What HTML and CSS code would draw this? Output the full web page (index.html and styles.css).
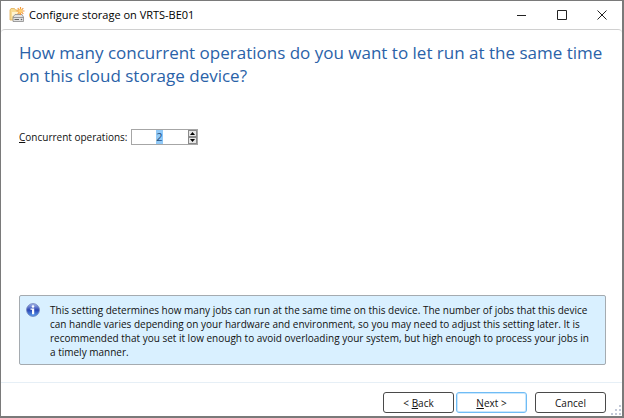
FILE: index.html
```
<!DOCTYPE html>
<html lang="en">
<head>
    <meta charset="UTF-8">
    <meta name="viewport" content="width=device-width, initial-scale=1.0">
    <title>Configure storage on VRTS-BE01</title>
    <link rel="stylesheet" href="styles.css">
</head>
<body>
    <div class="window">
        <header class="titlebar">
            <svg class="app-icon" width="16" height="16" viewBox="0 0 16 16" aria-hidden="true">
                <path d="M1 13 V3 L2 1.500 H5.500 L6.500 3 H11 V13 Z" fill="#f8dc94" stroke="#e0ae58" stroke-width=".8"/>
                <path d="M3 5 H10 V9 H3 Z" fill="#fff3cf"/>
                <path d="M4 10 L6 7.500 H13 L14.500 10 V14.500 H4 Z" fill="#e2e2e2" stroke="#8a8a8a" stroke-width=".8"/>
                <path d="M4 10.500 H14.500" stroke="#8a8a8a" stroke-width=".8"/>
                <path d="M5.500 12.500 H10" stroke="#666"/>
                <circle cx="12.500" cy="12.500" r=".8" fill="#666"/>
                <path d="M11.500 0 V8 M7.500 4 H15.500 M8.700 1.200 L14.300 6.800 M14.300 1.200 L8.700 6.800" stroke="#f29a3e" stroke-width="1.200"/>
                <circle cx="11.500" cy="4" r="1.900" fill="#ffcf70"/>
            </svg>
            <h1 class="window-title">Configure storage on VRTS-BE01</h1>
            <div class="window-controls">
                <button type="button" class="window-button" aria-label="Minimize">
                    <svg width="10" height="10" viewBox="0 0 10 10"><path d="M0 5.500 H9"/></svg>
                </button>
                <button type="button" class="window-button" aria-label="Maximize">
                    <svg width="10" height="10" viewBox="0 0 10 10"><path d="M.5 .5 H9.500 V9.500 H.5 Z"/></svg>
                </button>
                <button type="button" class="window-button" aria-label="Close">
                    <svg width="10" height="10" viewBox="0 0 10 10"><path d="M.5 .5 L9.500 9.500 M9.500 .5 L.5 9.500"/></svg>
                </button>
            </div>
        </header>

        <form class="wizard">
            <main class="content">
                <h2 class="question">How many concurrent operations do you want to let run at the same time on this cloud storage device?</h2>

                <div class="field">
                    <label for="operations"><u>C</u>oncurrent operations:</label>
                    <div class="spinner">
                        <input type="text" id="operations" class="spinner-value" name="operations" value="2" inputmode="numeric" autocomplete="off">
                        <div class="spinner-buttons">
                            <button type="button" class="spin" data-step="1" aria-label="Increase">
                                <svg width="5" height="3" viewBox="0 0 5 3"><path d="M0 3 L2.500 0 L5 3 Z"/></svg>
                            </button>
                            <button type="button" class="spin" data-step="-1" aria-label="Decrease">
                                <svg width="5" height="3" viewBox="0 0 5 3"><path d="M0 0 H5 L2.500 3 Z"/></svg>
                            </button>
                        </div>
                    </div>
                </div>

                <div class="info">
                    <svg class="info-icon" width="14" height="14" viewBox="0 0 14 14" aria-hidden="true">
                        <defs>
                            <linearGradient id="ball" x1="0" y1="0" x2="0" y2="1">
                                <stop offset="0" stop-color="#a9bcee"/>
                                <stop offset=".5" stop-color="#2a45b4"/>
                                <stop offset="1" stop-color="#5aa0f0"/>
                            </linearGradient>
                        </defs>
                        <circle cx="7" cy="7" r="6.400" fill="url(#ball)" stroke="#6b7cb8" stroke-width=".8"/>
                        <circle cx="7" cy="3.500" r="1.300" fill="#fff"/>
                        <path d="M4.500 5.500 H8.200 V11.200 H6 V6.800 H4.500 Z" fill="#fff"/>
                    </svg>
                    <p class="info-text">This setting determines how many jobs can run at the same time on this device. The number of jobs that this device can handle varies depending on your hardware and environment, so you may need to adjust this setting later. It is recommended that you set it low enough to avoid overloading your system, but high enough to process your jobs in a timely manner.</p>
                </div>
            </main>

            <footer class="footer">
                <button type="button" class="button">&lt; <u>B</u>ack</button>
                <button type="submit" class="button button-default"><u>N</u>ext &gt;</button>
                <button type="button" class="button button-cancel">Cancel</button>
            </footer>
        </form>

        <svg class="grip" width="11" height="11" viewBox="0 0 11 11" aria-hidden="true">
            <path d="M8 0h2v2h-2z M8 4h2v2h-2z M4 4h2v2h-2z M8 8h2v2h-2z M4 8h2v2h-2z M0 8h2v2h-2z"/>
        </svg>
    </div>

    <script>
        const operations = document.getElementById("operations");

        document.querySelectorAll(".spin").forEach(function (button) {
            button.addEventListener("click", function () {
                const value = Number(operations.value) + Number(button.dataset.step);
                operations.value = Math.max(1, value);
                operations.select();
            });
        });

        operations.focus();
        operations.select();
    </script>
</body>
</html>
```

FILE: styles.css
```
* {
    box-sizing: border-box;
    margin: 0;
    padding: 0;
}

body {
    font-family: "Open Sans", "Segoe UI", sans-serif;
    font-size: 10px;
    line-height: 14px;
    color: #111;
    background: #fff;
}

button,
input {
    font: inherit;
    color: inherit;
}

.window {
    position: relative;
    display: flex;
    flex-direction: column;
    min-height: 100vh;
    border: 1px solid #7a7a7a;
    border-width: 1px 2px 2px 1px;
    background: #fff;
}

.titlebar {
    display: flex;
    align-items: center;
    height: 28px;
    padding-left: 8px;
}

.window-title {
    flex: 1;
    margin-left: 4px;
    font-size: 11px;
    font-weight: 400;
    color: #000;
}

.window-controls {
    display: flex;
}

.window-button {
    display: flex;
    align-items: center;
    justify-content: center;
    width: 40px;
    height: 26px;
    border: none;
    background: none;
}

.window-button svg {
    fill: none;
    stroke: #222;
    stroke-width: 1;
}

.wizard {
    flex: 1;
    display: flex;
    flex-direction: column;
    border-top: 1px solid #d0d0d0;
    border-radius: 4px 4px 0 0;
}

.content {
    flex: 1;
    display: flex;
    flex-direction: column;
    padding: 11px 16px 17px 18px;
}

.question {
    font-size: 17px;
    font-weight: 400;
    line-height: 23px;
    color: #2a62a8;
}

.field {
    display: flex;
    align-items: center;
    gap: 3px;
    margin-top: 42px;
}

.spinner {
    display: flex;
    width: 67px;
    height: 16px;
    border: 1px solid #a6a6a6;
    background: #fff;
}

.spinner-value {
    flex: 1;
    min-width: 0;
    border: none;
    outline: none;
    font-size: 11px;
    text-align: center;
    background: none;
}

.spinner-value::selection {
    color: #1e4f80;
    background: #91c9f7;
}

.spinner-buttons {
    display: flex;
    flex-direction: column;
    width: 9px;
}

.spin {
    flex: 1;
    display: flex;
    align-items: center;
    justify-content: center;
    border: 1px solid #8a8a8a;
    background: #e6e6e6;
}

.spin svg {
    flex: none;
    fill: #000;
}

.info {
    display: flex;
    margin-top: auto;
    padding: 7px 8px 5px 6px;
    border: 1px solid #a5abb0;
    border-radius: 2px;
    background: #d9f0ff;
}

.info-icon {
    flex: none;
}

.info-text {
    margin-left: 10px;
}

.footer {
    display: flex;
    justify-content: flex-end;
    gap: 2px;
    padding: 9px 16px 3px;
    border-top: 1px solid #e6eff6;
}

.button {
    width: 71px;
    height: 21px;
    border: 1px solid #4a4a4a;
    border-radius: 3px;
    background: #fff;
}

.button-default {
    border-color: #6fbcf5;
    box-shadow: inset 0 0 0 1px #c9e7fd;
}

.button-cancel {
    margin-left: 6px;
}

.grip {
    position: absolute;
    right: 0;
    bottom: 0;
    fill: #c3c9d8;
}
```
